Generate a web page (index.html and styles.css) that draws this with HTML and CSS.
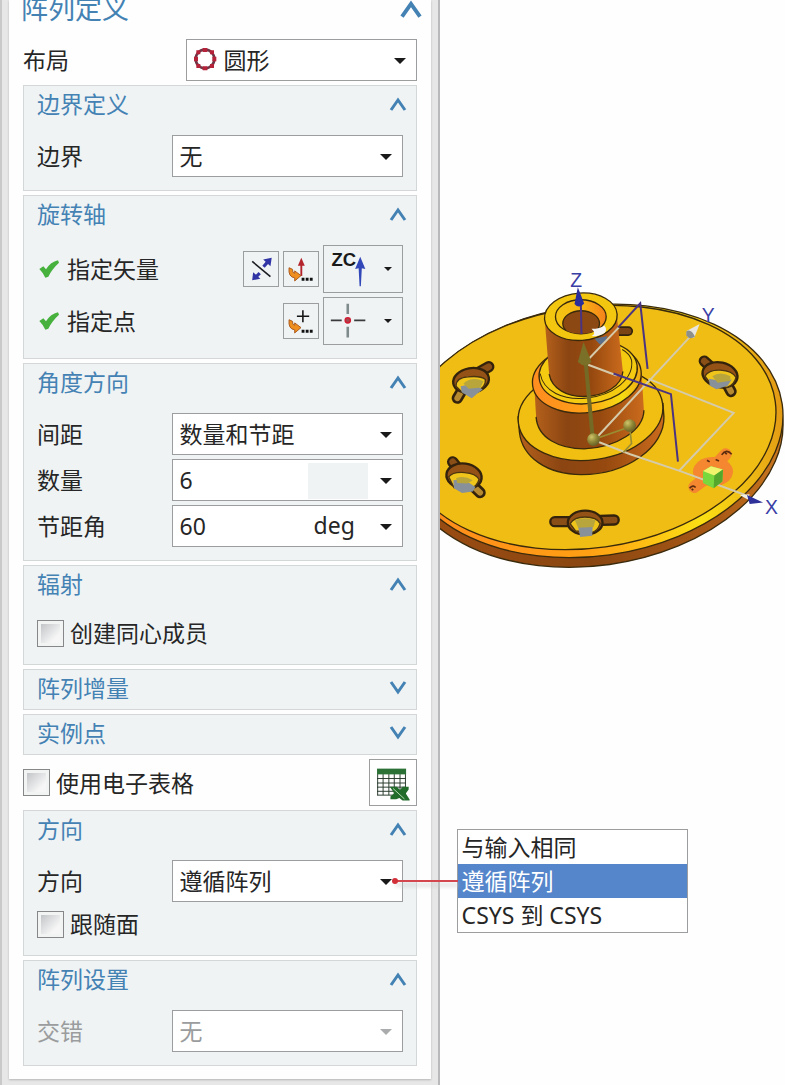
FILE: index.html
```html
<!DOCTYPE html>
<html lang="zh-CN">
<head>
    <meta charset="UTF-8">
    <meta name="viewport" content="width=device-width, initial-scale=1.0">
    <title>阵列定义</title>
    <link rel="stylesheet" href="styles.css">
</head>
<body>
    <!-- shared icons -->
    <svg class="icon-defs" width="0" height="0" aria-hidden="true">
        <symbol id="chevron-up" viewBox="0 0 18 14">
            <path d="M2 13 9 3 16 13" fill="none" stroke="currentColor" stroke-width="3" />
        </symbol>
        <symbol id="chevron-down" viewBox="0 0 18 14">
            <path d="M2 1 9 11 16 1" fill="none" stroke="currentColor" stroke-width="3" />
        </symbol>
        <symbol id="check" viewBox="0 0 60 54">
            <path d="M1 27 13 19 21 28C30 14 42 4 57 1L60 8C46 20 35 35 28 50L19 53Q12 38 1 27Z" fill="#47b13d" />
        </symbol>
        <symbol id="pick-arrow" viewBox="0 0 108 108">
            <path d="M16 50Q13 80 34 82L34 92 54 75 34 60 34 68Q26 67 27 55Z" fill="#ef8f20" stroke="#a8561c" stroke-width="3" />
            <path d="M56 82h9v9h-9zM69 82h9v9h-9zM82 82h9v9h-9z" fill="#111" />
        </symbol>
    </svg>

    <div class="app">
        <form class="panel">
            <div class="panel-body">
                <button type="button" class="panel-title">
                    <span>阵列定义</span>
                    <svg class="chevron-big"><use href="#chevron-up" /></svg>
                </button>

                <div class="row">
                    <label for="layout">布局</label>
                    <div class="field has-icon">
                        <svg class="field-icon" viewBox="0 0 72 72">
                            <circle cx="33" cy="33" r="28" fill="none" stroke="#6d3545" stroke-width="8" />
                            <path d="M26 0h14v12H26zM26 55h14v12H26zM0 26h12v14H0zM55 26h12v14H55zM7 7h12v12H7zM48 7h12v12H48zM7 48h12v12H7zM48 48h12v12H48z" fill="#b5233a" />
                        </svg>
                        <select id="layout"><option>圆形</option></select>
                    </div>
                </div>

                <section class="group">
                    <button type="button" class="group-title">
                        <span>边界定义</span>
                        <svg class="chevron"><use href="#chevron-up" /></svg>
                    </button>
                    <div class="group-body">
                        <div class="row">
                            <label for="boundary">边界</label>
                            <div class="field">
                                <select id="boundary"><option>无</option></select>
                            </div>
                        </div>
                    </div>
                </section>

                <section class="group">
                    <button type="button" class="group-title">
                        <span>旋转轴</span>
                        <svg class="chevron"><use href="#chevron-up" /></svg>
                    </button>
                    <div class="group-body">
                        <div class="row">
                            <span class="checked"><svg class="check"><use href="#check" /></svg>指定矢量</span>
                            <div class="tools">
                                <button type="button" class="tool" aria-label="反向">
                                    <svg viewBox="0 0 108 108">
                                        <path d="M26 30 84 78" stroke="#1b1b22" stroke-width="5" />
                                        <path d="M62 47 74 33M50 67 38 79" stroke="#3034a4" stroke-width="10" />
                                        <path d="M88 18 84 45 61 24ZM26 90 29 64 52 85Z" fill="#3034a4" />
                                    </svg>
                                </button>
                                <button type="button" class="tool" aria-label="矢量对话框">
                                    <svg viewBox="0 0 108 108">
                                        <path d="M55 76V38" stroke="#b3242c" stroke-width="6" />
                                        <path d="M55 18 66 44H44Z" fill="#b3242c" />
                                        <use href="#pick-arrow" />
                                    </svg>
                                </button>
                                <button type="button" class="tool-wide" aria-label="ZC 轴">
                                    <svg viewBox="0 0 156 144">
                                        <text x="20" y="62" class="zc">ZC</text>
                                        <path d="M110 34 126 72 115 70 112 126H108L105 70 94 72Z" fill="#3247b8" />
                                    </svg>
                                </button>
                            </div>
                        </div>
                        <div class="row">
                            <span class="checked"><svg class="check"><use href="#check" /></svg>指定点</span>
                            <div class="tools">
                                <button type="button" class="tool" aria-label="点对话框">
                                    <svg viewBox="0 0 108 108">
                                        <path d="M41 39H80M60 20V58" stroke="#151515" stroke-width="5" />
                                        <use href="#pick-arrow" />
                                    </svg>
                                </button>
                                <button type="button" class="tool-wide" aria-label="点类型">
                                    <svg viewBox="0 0 156 144">
                                        <path d="M18 70H52M91 70H126" stroke="#3a3a3a" stroke-width="5" />
                                        <path d="M71 18V50M71 90V124" stroke="#7f8b8b" stroke-width="8" />
                                        <circle cx="71" cy="70" r="8" fill="#a3494f" stroke="#d01f35" stroke-width="5" />
                                    </svg>
                                </button>
                            </div>
                        </div>
                    </div>
                </section>

                <section class="group">
                    <button type="button" class="group-title">
                        <span>角度方向</span>
                        <svg class="chevron"><use href="#chevron-up" /></svg>
                    </button>
                    <div class="group-body">
                        <div class="row">
                            <label for="spacing">间距</label>
                            <div class="field">
                                <select id="spacing"><option>数量和节距</option></select>
                            </div>
                        </div>
                        <div class="row">
                            <label for="count">数量</label>
                            <div class="field">
                                <input type="text" id="count" value="6">
                                <span class="unit unit-empty"></span>
                            </div>
                        </div>
                        <div class="row">
                            <label for="pitch">节距角</label>
                            <div class="field">
                                <input type="text" id="pitch" value="60">
                                <span class="unit">deg</span>
                            </div>
                        </div>
                    </div>
                </section>

                <section class="group">
                    <button type="button" class="group-title">
                        <span>辐射</span>
                        <svg class="chevron"><use href="#chevron-up" /></svg>
                    </button>
                    <div class="group-body">
                        <label class="check-row"><input type="checkbox">创建同心成员</label>
                    </div>
                </section>

                <section class="group">
                    <button type="button" class="group-title">
                        <span>阵列增量</span>
                        <svg class="chevron"><use href="#chevron-down" /></svg>
                    </button>
                </section>

                <section class="group">
                    <button type="button" class="group-title">
                        <span>实例点</span>
                        <svg class="chevron"><use href="#chevron-down" /></svg>
                    </button>
                </section>

                <div class="row sheet-row">
                    <label class="check-row"><input type="checkbox">使用电子表格</label>
                    <button type="button" class="sheet" aria-label="电子表格">
                        <svg viewBox="0 0 144 144">
                            <path d="M22 28H112V110H22Z" fill="#fff" />
                            <path d="M24 44V110M41 44V110M59 44V110M76 44V110M94 44V110M111 44V110M22 58H112M22 72H112M22 85H112M22 98H112M22 110H76" fill="none" stroke="#27382b" stroke-width="3" />
                            <path d="M22 27H113V45H22Z" fill="#2c7135" />
                            <path d="M62 84H84L94 94 102 84H121V92L112 105 124 124V127H102L92 119 82 123H64V114L76 104Z" fill="#226c2c" />
                            <path d="M72 89 108 122" stroke="#b9e0b4" stroke-width="3" />
                        </svg>
                    </button>
                </div>

                <section class="group">
                    <button type="button" class="group-title">
                        <span>方向</span>
                        <svg class="chevron"><use href="#chevron-up" /></svg>
                    </button>
                    <div class="group-body">
                        <div class="row">
                            <label for="orientation">方向</label>
                            <div class="field">
                                <select id="orientation"><option>遵循阵列</option></select>
                                <span class="callout"></span>
                                <ul class="menu" role="listbox" aria-label="方向">
                                    <li role="option">与输入相同</li>
                                    <li role="option" class="selected" aria-selected="true">遵循阵列</li>
                                    <li role="option">CSYS 到 CSYS</li>
                                </ul>
                            </div>
                        </div>
                        <label class="check-row"><input type="checkbox">跟随面</label>
                    </div>
                </section>

                <section class="group">
                    <button type="button" class="group-title">
                        <span>阵列设置</span>
                        <svg class="chevron"><use href="#chevron-up" /></svg>
                    </button>
                    <div class="group-body">
                        <div class="row disabled">
                            <label for="stagger">交错</label>
                            <div class="field">
                                <select id="stagger" disabled><option>无</option></select>
                            </div>
                        </div>
                    </div>
                </section>
            </div>
        </form>

        <main class="viewport">
            <svg class="model" viewBox="30 0 1035 960" role="img" aria-label="法兰模型">
                <defs>
                    <linearGradient id="side" x1="0" x2="1">
                        <stop offset="0" stop-color="#9c4d12" />
                        <stop offset=".45" stop-color="#8a4611" />
                        <stop offset=".8" stop-color="#a95a16" />
                        <stop offset="1" stop-color="#cd7a20" />
                    </linearGradient>
                    <linearGradient id="rim" x1="0" x2="1">
                        <stop offset="0" stop-color="#ff8a1c" />
                        <stop offset=".45" stop-color="#ffa014" />
                        <stop offset=".75" stop-color="#fbe014" />
                        <stop offset="1" stop-color="#e39a14" />
                    </linearGradient>
                    <linearGradient id="tube" x1="0" x2="1">
                        <stop offset="0" stop-color="#b5611b" />
                        <stop offset=".3" stop-color="#8b4512" />
                        <stop offset=".6" stop-color="#96490f" />
                        <stop offset="1" stop-color="#cb6b1d" />
                    </linearGradient>
                    <linearGradient id="chamfer" x1="0" x2="1">
                        <stop offset="0" stop-color="#ff8d20" />
                        <stop offset=".4" stop-color="#ff9d18" />
                        <stop offset=".8" stop-color="#f5dc12" />
                        <stop offset="1" stop-color="#f0a715" />
                    </linearGradient>
                    <linearGradient id="bore" x1="0" x2="1">
                        <stop offset="0" stop-color="#f3c513" />
                        <stop offset=".5" stop-color="#f8b512" />
                        <stop offset="1" stop-color="#f5811c" />
                    </linearGradient>
                    <radialGradient id="ball" cx=".35" cy=".3" r=".8">
                        <stop offset="0" stop-color="#d0c56a" />
                        <stop offset=".5" stop-color="#8f8636" />
                        <stop offset="1" stop-color="#5e5822" />
                    </radialGradient>
                    <clipPath id="bore-clip"><ellipse cx="452" cy="170" rx="76" ry="51" /></clipPath>
                </defs>

                <!-- disc -->
                <g stroke="#3a2a0c" stroke-width="4">
                    <ellipse cx="486" cy="541" rx="575" ry="375" transform="rotate(-8 486 541)" fill="url(#side)" />
                    <ellipse cx="486" cy="512" rx="575" ry="375" transform="rotate(-8 486 512)" fill="url(#rim)" />
                    <ellipse cx="476" cy="502" rx="564" ry="361" transform="rotate(-8 476 502)" fill="#efbd13" />
                </g>

                <!-- bolt slots -->
                <g stroke-linecap="round" fill="none">
                    <path d="M560 213H594" stroke="#33220c" stroke-width="29" />
                    <path d="M560 213H594" stroke="#7a4414" stroke-width="19" />

                    <path d="M82 414 95 392M136 342 176 320M822 303 846 325M890 372 902 394M68 605 88 630M132 680 150 697M374 784 422 784M510 780 552 779" stroke="#33220c" stroke-width="34" />
                    <path d="M136 342 176 320M822 303 846 325M68 605 88 630M374 784 422 784M510 780 552 779" stroke="#8a4e17" stroke-width="20" />
                    <path d="M82 414 95 392M890 372 902 394M132 680 150 697" stroke="#b88a30" stroke-width="18" />
                </g>
                <g stroke="#33220c" stroke-width="7">
                    <ellipse cx="123" cy="361" rx="54" ry="37" transform="rotate(-10 123 361)" fill="#955216" />
                    <ellipse cx="869" cy="344" rx="53" ry="37" transform="rotate(12 869 344)" fill="#955216" />
                    <ellipse cx="102" cy="648" rx="53" ry="38" transform="rotate(8 102 648)" fill="#955216" />
                    <ellipse cx="465" cy="787" rx="52" ry="36" fill="#955216" />
                </g>
                <g fill="#efc51c" stroke="#4b3510" stroke-width="4">
                    <path d="M78 378Q78 352 114 350Q152 346 166 358Q168 382 140 393L100 400Z" />
                    <path d="M824 348Q836 328 870 330Q906 332 917 352Q912 374 890 382L842 372Z" />
                    <path d="M56 650Q68 634 104 637Q138 640 147 657Q142 680 118 686L72 682Z" />
                    <path d="M420 790Q432 770 464 770Q500 770 510 790Q502 812 486 816L436 812Z" />
                </g>
                <g>
                    <path d="M92 378 130 370 158 388 142 400 125 414 95 396Z" fill="#88909a" />
                    <path d="M100 370Q126 348 160 363L152 382 116 386Z" fill="#b8a63c" />
                    <path d="M836 356 870 362 904 358 892 377 858 387 838 376Z" fill="#88909a" />
                    <path d="M846 348Q870 332 900 348L900 362 862 368Z" fill="#b8a63c" />
                    <path d="M70 660 100 656 136 680 128 694 96 698 72 684Z" fill="#88909a" />
                    <path d="M78 654Q102 644 128 660L112 670 82 668Z" fill="#b8a63c" />
                    <path d="M442 790 488 790 486 826 450 830Z" fill="#88909a" />
                    <path d="M434 780Q464 768 496 780L490 800 444 802Z" fill="#b8a63c" />
                </g>

                <!-- base collar -->
                <g stroke="#3a2a0c" stroke-width="4">
                    <path d="M264 470 268 516C276 590 350 643 454 643C590 643 704 560 701 470L698 430Z" fill="url(#tube)" />
                    <ellipse cx="481" cy="460" rx="218" ry="139" transform="rotate(-8 481 460)" fill="#f1bf12" />
                    <!-- middle step -->
                    <path d="M312 370 318 470C322 535 390 566 462 566C560 562 640 510 641 450L634 340Z" fill="url(#tube)" stroke="none" />
                    <path d="M318 470C322 535 390 566 462 566C560 562 640 510 641 450" fill="none" />
                    <ellipse cx="470" cy="354" rx="164" ry="103" transform="rotate(-8 470 354)" fill="url(#chamfer)" />
                    <ellipse cx="474" cy="336" rx="148" ry="94" transform="rotate(-8 474 336)" fill="#f5cb12" />
                    <path d="M330 340C340 395 400 420 466 414C550 406 612 355 604 300Q598 280 576 268" fill="none" stroke-width="3" />
                    <!-- top tube -->
                    <path d="M344 180 357 342C366 388 412 410 462 409C526 407 575 376 578 334L560 168Z" fill="url(#tube)" stroke="none" />
                    <path d="M357 342C366 388 412 410 462 409C526 407 575 376 578 334" fill="none" />
                    <ellipse cx="452" cy="170" rx="109" ry="71" transform="rotate(-4 452 170)" fill="#f3c710" />
                    <ellipse cx="452" cy="170" rx="76" ry="51" fill="url(#bore)" />
                    <ellipse cx="453" cy="190" rx="55" ry="38" fill="#8c4812" clip-path="url(#bore-clip)" />
                </g>
                <path d="M484 206Q510 206 522 196Q532 206 524 218Q508 230 484 228Q500 220 484 206Z" fill="#f4f5f2" />
                <path d="M493 236 532 228 525 244 510 254Z" fill="#5b6e8a" />

                <!-- selected instance -->
                <g fill="#f4872f">
                    <path d="M792 680 825 655M860 610 886 582" stroke="#f4872f" stroke-width="36" stroke-linecap="round" />
                    <ellipse cx="848" cy="634" rx="60" ry="44" />
                    <path d="M874 584Q888 564 904 582M778 684Q788 672 796 682M830 600l8 5M856 598l10 4M884 578l6 3M784 686l5 3" fill="none" stroke="#5d2b0e" stroke-width="5" />
                </g>

                <!-- construction lines -->
                <g fill="none" stroke="#d5cbab" stroke-width="6">
                    <path d="M492 540 783 226M655 356 910 458 748 630M492 540 600 582 748 632 945 704M474 314 560 346M474 298 566 202" />
                </g>
                <g fill="none" stroke="#4a3482" stroke-width="6">
                    <path d="M564 202 630 130 652 326M550 340 722 402 743 604M452 130 454 222" />
                </g>
                <path d="M443 82 462 130Q447 148 433 132Z" fill="#2b2d9b" />
                <path d="M770 212 808 192 792 232Q772 238 768 222Z" fill="#e9e6df" />
                <path d="M768 214Q782 204 794 230Q778 240 768 226Z" fill="#8d8f8b" />
                <path d="M928 704 958 702 952 718Z" fill="#efefe8" />
                <path d="M950 704 998 727 958 731Z" fill="#2e3199" />

                <path d="M466 300 488 540" stroke="#746a25" stroke-width="12" />
                <path d="M460 246 484 306Q464 326 443 306Z" fill="#7a7028" />
                <path d="M490 538 598 500 604 550 580 576" fill="none" stroke="#9a8c32" stroke-width="5" />
                <circle cx="490" cy="538" r="19" fill="url(#ball)" />
                <circle cx="598" cy="496" r="19" fill="url(#ball)" />

                <path d="M818 632 842 618 878 628 876 664 850 684 818 668Z" fill="#7ad83f" />
                <path d="M818 632 842 618 878 628 852 646Z" fill="#f0f36b" />
                <path d="M852 646 878 628 876 664 850 684Z" fill="#55a62c" />

                <text x="420" y="82" class="axis">Z</text>
                <text x="814" y="186" class="axis">Y</text>
                <text x="1004" y="762" class="axis">X</text>
            </svg>
        </main>
    </div>
</body>
</html>
```

FILE: styles.css
```css
*{
    box-sizing: border-box;
}
body{
    margin: 0;
    background-color: #fefefe;
    color: #262626;
    font-family: "Noto Sans", "Noto Sans CJK SC", sans-serif;
    font-size: 23px;
    line-height: 32px;
}
button, input, select{
    font: inherit;
    color: inherit;
    margin: 0;
    padding: 0;
    border: none;
    background: none;
    border-radius: 0;
}
svg{
    display: block;
}
.icon-defs{
    position: absolute;
}
.app{
    display: grid;
    grid-template-columns: 56% 1fr;
    min-height: 100vh;
}

/* panel */
.panel{
    background-color: #e7e7e8;
    border-left: 2px solid #c9c9ca;
    border-right: 2px solid #b9b9bb;
    padding: 0 7px 6px;
}
.panel-body{
    display: flex;
    flex-direction: column;
    gap: 4px;
    padding: 0 14px 13px;
    background-color: #fefefe;
    box-shadow: 0 1px 2px #b5b5b5;
}
.panel-title{
    display: flex;
    justify-content: space-between;
    padding-bottom: 17px;
    font-size: 27px;
    line-height: 18px;
    color: #4482b4;
    text-align: left;
}
.panel-title span{
    margin-left: -2px;
}
.chevron-big{
    width: 24px;
    height: 18px;
    margin-right: -6px;
}
.group{
    background-color: #eff3f4;
    border: 1px solid #d3d7d8;
}
.group-title{
    display: flex;
    justify-content: space-between;
    align-items: center;
    width: 100%;
    height: 39px;
    padding: 0 9px 3px 13px;
    color: #4482b4;
}
.chevron{
    width: 18px;
    height: 14px;
}
.group-body{
    display: flex;
    flex-direction: column;
    gap: 4px;
    padding: 10px 13px 13px;
}
.row{
    display: flex;
    justify-content: space-between;
    align-items: center;
}

/* fields */
.field{
    position: relative;
    display: flex;
    flex: 0 0 231px;
    min-width: 0;
    height: 42px;
    background-color: #fff;
    border: 1px solid #9b9d9f;
}
.field:after, .tool-wide:after{
    content: '';
    border: 6px solid transparent;
    border-top-color: #1a1a1a;
    border-bottom: none;
}
.field:after{
    position: absolute;
    top: 18px;
    right: 10px;
    pointer-events: none;
}
.field select{
    appearance: none;
    width: 100%;
    padding: 0 30px 0 7px;
    opacity: 1;
}
.has-icon select{
    padding-left: 37px;
}
.field-icon{
    position: absolute;
    top: 8px;
    left: 7px;
    width: 24px;
    height: 24px;
    pointer-events: none;
}
.field input{
    flex: 1;
    width: 100%;
    min-width: 0;
    padding-left: 7px;
}
.unit{
    flex: 0 0 60px;
    margin: 3px 34px 1px 0;
    padding-left: 6px;
}
.unit-empty{
    background-color: #eff3f4;
}
.disabled{
    color: #9a9c9d;
}
.disabled .field:after{
    border-top-color: #a9abac;
}

/* checkboxes */
.check-row{
    display: flex;
    align-items: center;
    gap: 6px;
    height: 36px;
}
.check-row input{
    appearance: none;
    width: 27px;
    height: 27px;
    border: 1px solid #858789;
    background: linear-gradient(135deg, #c2c5c8, #f6f6f6 75%) content-box, #f2f3f3;
    padding: 3px;
}
.checked{
    display: flex;
    align-items: center;
    gap: 8px;
}
.check{
    width: 20px;
    height: 18px;
    margin-left: 2px;
}

/* tool buttons */
.tools{
    display: flex;
    align-items: center;
    gap: 4px;
}
.tool, .tool-wide, .sheet{
    border: 1px solid #9b9d9f;
}
.tool{
    width: 36px;
    height: 36px;
}
.tool-wide{
    display: flex;
    align-items: center;
    width: 80px;
    height: 48px;
}
.tool-wide svg{
    width: 52px;
    height: 46px;
}
.tool-wide:after{
    border-width: 4px 4px 0;
    margin-left: 8px;
}
.zc{
    font: bold 58px "Liberation Sans", sans-serif;
    fill: #1a1a1a;
}
.sheet-row{
    height: 47px;
}
.sheet{
    width: 48px;
    height: 47px;
    background-color: #fff;
}

/* drop-down list */
.callout{
    position: absolute;
    z-index: 1;
    top: 19px;
    left: calc(100% - 7px);
    width: 63px;
    height: 2px;
    background-color: #d4474f;
    box-shadow: 0 4px 4px #cccccc;
}
.callout:before{
    content: '';
    position: absolute;
    top: -2px;
    left: -3px;
    width: 6px;
    height: 6px;
    border-radius: 50%;
    background-color: #d22f39;
}
.menu{
    position: absolute;
    top: -32px;
    left: calc(100% + 55px);
    width: 100%;
    min-width: 231px;
    margin: 0;
    padding: 0;
    list-style: none;
    background-color: #fff;
    border: 1px solid #9b9d9f;
}
.menu li{
    height: 34px;
    padding-left: 4px;
    line-height: 34px;
}
.menu .selected{
    background-color: #5586cb;
    color: #fff;
}

/* model view */
.viewport{
    padding-top: 260px;
}
.model{
    width: 100%;
}
.axis{
    font: 58px "Liberation Sans", sans-serif;
    fill: #3a3fa6;
}
```
